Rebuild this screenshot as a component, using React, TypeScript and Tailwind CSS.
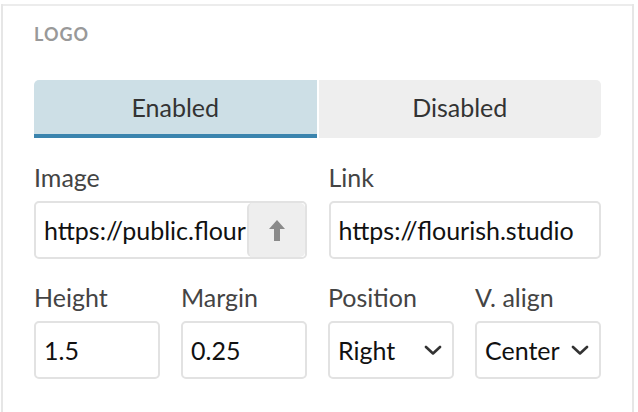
import React from "react";

const font = { fontFamily: "Lato, 'Noto Sans', sans-serif" };

function Label({ children }: { children: React.ReactNode }) {
  return <div className="mb-[9px] text-[25px] leading-[30px] text-[#444]">{children}</div>;
}

function Chevron() {
  return (
    <svg width="18" height="10" viewBox="0 0 18 10" className="shrink-0">
      <polyline points="2,2 9,8.5 16,2" fill="none" stroke="#333" strokeWidth="2.6" strokeLinecap="round" strokeLinejoin="round" />
    </svg>
  );
}

function TextBox({ value }: { value: string }) {
  return (
    <div className="flex h-[58px] items-center overflow-hidden whitespace-nowrap rounded-[5px] border-2 border-[#e2e2e2] px-[8px] text-[25px] leading-[30px] text-[#111]">
      {value}
    </div>
  );
}

function SelectBox({ value }: { value: string }) {
  return (
    <div className="flex h-[58px] items-center justify-between rounded-[5px] border-2 border-[#e2e2e2] pl-[8px] pr-[10px] text-[25px] leading-[30px] text-[#111]">
      <span>{value}</span>
      <Chevron />
    </div>
  );
}

export default function App() {
  return (
    <div className="h-[412px] w-[638px] bg-white" style={font}>
      <div className="ml-[1px] h-full w-[633px] border-x-2 border-[#e6e6e6]">
        <div className="mt-[4px] border-t-2 border-[#ececec] pl-[31px] pr-[31px] pt-[16px]">
          <div className="text-[18px] font-bold leading-[24px] tracking-[1px] text-[#999]">LOGO</div>

          <div className="mt-[34px] flex gap-[2px]">
            <div className="flex h-[58px] flex-1 items-center justify-center rounded-tl-[5px] border-b-4 border-[#3a84ae] bg-[#cddfe6] text-[25px] leading-[30px] text-[#333]">
              Enabled
            </div>
            <div className="flex h-[58px] flex-1 items-center justify-center rounded-r-[5px] border-b-4 border-[#eeeeee] bg-[#eeeeee] text-[25px] leading-[30px] text-[#333]">
              Disabled
            </div>
          </div>

          <div className="mt-[24px] grid grid-cols-2 gap-x-[22px]">
            <div>
              <Label>Image</Label>
              <div className="flex h-[58px] overflow-hidden rounded-[5px] border-2 border-[#e2e2e2]">
                <div className="flex min-w-0 flex-1 items-center overflow-hidden whitespace-nowrap pl-[8px] text-[25px] leading-[30px] text-[#111]">
                  https://public.flourish.studio
                </div>
                <div className="flex w-[58px] shrink-0 items-center justify-center rounded-[5px] border-l-2 border-[#e2e2e2] bg-[#eeeeee]">
                  <svg width="16" height="21" viewBox="0 0 16 21">
                    <path d="M8 0 L16 9 L11 9 L11 21 L5 21 L5 9 L0 9 Z" fill="#8a8a8a" />
                  </svg>
                </div>
              </div>
            </div>
            <div>
              <Label>Link</Label>
              <TextBox value="https://flourish.studio" />
            </div>
          </div>

          <div className="mt-[23px] grid grid-cols-4 gap-x-[21px]">
            <div>
              <Label>Height</Label>
              <TextBox value="1.5" />
            </div>
            <div>
              <Label>Margin</Label>
              <TextBox value="0.25" />
            </div>
            <div>
              <Label>Position</Label>
              <SelectBox value="Right" />
            </div>
            <div>
              <Label>V. align</Label>
              <SelectBox value="Center" />
            </div>
          </div>
        </div>
      </div>
    </div>
  );
}
